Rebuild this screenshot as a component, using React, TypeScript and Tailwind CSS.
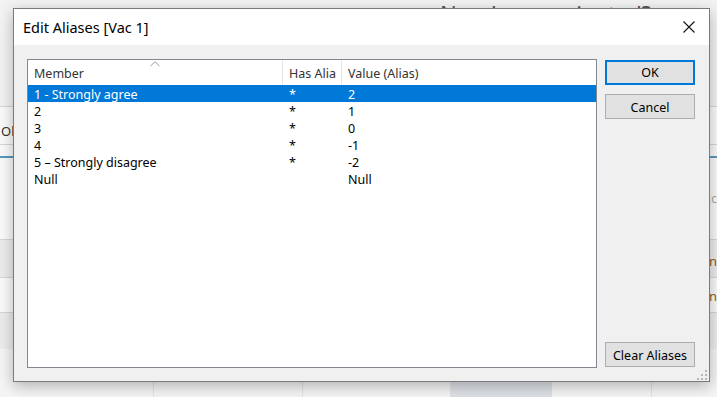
import React from "react";

const rows = [
  { m: "1 - Strongly agree", h: "*", v: "2", sel: true },
  { m: "2", h: "*", v: "1" },
  { m: "3", h: "*", v: "0" },
  { m: "4", h: "*", v: "-1" },
  { m: "5 – Strongly disagree", h: "*", v: "-2" },
  { m: "Null", h: "", v: "Null" },
];

export default function App() {
  return (
    <div className="relative w-[717px] h-[397px] overflow-hidden bg-[#f7f7f7] font-['Noto_Sans',sans-serif]">
      {/* background page */}
      <div className="flex flex-col h-full">
        <div className="h-[107px] shrink-0 bg-[#f3f3f3] pl-[440px] pt-[2px] text-[22px] leading-none text-[#555] border-b border-[#d6d6d6] whitespace-nowrap">
          Number vaccinated?
        </div>
        <div className="h-[38px] shrink-0 flex items-center pl-[1px] pt-[12px] text-[13px] text-[#333] border-b border-[#d6d6d6] bg-[#fafafa]">
          Ol
        </div>
        <div className="h-[11px] shrink-0 bg-[#fafafa]" />
        <div className="h-[2px] shrink-0 bg-[#5a96c0]" />
        <div className="h-[81px] shrink-0 flex items-center justify-end text-[12px] text-[#b3a88c] bg-[#fafafa]">
          l.c
        </div>
        <div className="h-[38px] shrink-0 flex items-center justify-end pt-[6px] text-[13px] text-[#8a5a2a] border-t border-[#d6d6d6] bg-[#ececec]">
          n
        </div>
        <div className="h-[35px] shrink-0 flex items-center justify-end pt-[4px] text-[13px] text-[#8a5a2a] border-t border-[#d6d6d6] bg-[#fafafa]">
          n
        </div>
        <div className="h-[37px] shrink-0 border-t border-[#d6d6d6] bg-[#ececec]" />
        <div className="flex-1 flex bg-[#f5f5f5]">
          <div className="w-[154px] border-r border-[#e2e2e2]" />
          <div className="w-[149px] border-r border-[#e2e2e2]" />
          <div className="w-[148px] border-r border-[#e2e2e2]" />
          <div className="w-[101px] border-r border-[#e2e2e2] bg-[#dde1e6]" />
          <div className="w-[100px] border-r border-[#e2e2e2]" />
        </div>
      </div>

      {/* dialog */}
      <div className="absolute left-[13px] top-[8px] w-[697px] h-[374px] flex flex-col border border-[#7a7a7a] bg-[#f0f0f0] shadow-[0_4px_14px_rgba(0,0,0,0.28)]">
        <div className="h-[36px] shrink-0 bg-white flex items-center justify-between pl-[9px] pr-[14px]">
          <span className="text-[14.5px] text-black leading-none">Edit Aliases [Vac 1]</span>
          <svg width="12" height="12" viewBox="0 0 12 12" className="block">
            <path d="M0.5 0.5 L11.5 11.5 M11.5 0.5 L0.5 11.5" stroke="#111" strokeWidth="1.1" fill="none" />
          </svg>
        </div>
        <div className="flex-1 flex gap-[8px] pt-[14px] pb-[13px] pl-[13px] pr-[14px]">
          {/* list */}
          <div className="w-[570px] flex flex-col border border-[#828790] bg-white text-[12.5px] leading-none text-black">
            <div className="h-[25px] shrink-0 flex text-[#333]">
              <div className="relative w-[255px] flex items-center pl-[6px] pt-[4px] border-r border-[#e5e5e5]">
                Member
                <svg width="10" height="6" viewBox="0 0 10 6" className="absolute left-[122px] top-[1px]">
                  <path d="M0.5 5 L5 0.8 L9.5 5" stroke="#9a9a9a" strokeWidth="1" fill="none" />
                </svg>
              </div>
              <div className="w-[59px] flex items-center pl-[6px] pt-[4px] border-r border-[#e5e5e5] overflow-hidden whitespace-nowrap">
                Has Alia
              </div>
              <div className="flex-1 flex items-center pl-[6px] pt-[4px]">Value (Alias)</div>
            </div>
            {rows.map((r, i) => (
              <div
                key={i}
                className={
                  r.sel
                    ? "h-[17px] shrink-0 flex items-center pt-[3px] bg-[#0078d7] text-white"
                    : "h-[17px] shrink-0 flex items-center pt-[3px]"
                }
              >
                <div className="w-[255px] pl-[6px] whitespace-nowrap">{r.m}</div>
                <div className="w-[59px] pl-[6px]">{r.h}</div>
                <div className="flex-1 pl-[6px]">{r.v}</div>
              </div>
            ))}
          </div>
          {/* buttons */}
          <div className="w-[90px] flex flex-col pt-[1px] pb-[1px] text-[12.5px] text-black">
            <button className="h-[25px] pt-[2px] bg-[#e1e1e1] border-2 border-[#0078d7] flex items-center justify-center leading-none">
              OK
            </button>
            <button className="h-[25px] pt-[3px] mt-[9px] bg-[#e1e1e1] border border-[#adadad] flex items-center justify-center leading-none">
              Cancel
            </button>
            <div className="flex-1" />
            <button className="h-[25px] pt-[3px] bg-[#e1e1e1] border border-[#adadad] flex items-center justify-center leading-none">
              Clear Aliases
            </button>
          </div>
        </div>
        <svg width="10" height="10" viewBox="0 0 10 10" className="absolute right-[2px] bottom-[1px]">
          <rect x="8" y="0" width="2" height="2" fill="#b5b5b5" />
          <rect x="4" y="4" width="2" height="2" fill="#b5b5b5" />
          <rect x="8" y="4" width="2" height="2" fill="#b5b5b5" />
          <rect x="0" y="8" width="2" height="2" fill="#b5b5b5" />
          <rect x="4" y="8" width="2" height="2" fill="#b5b5b5" />
          <rect x="8" y="8" width="2" height="2" fill="#b5b5b5" />
        </svg>
      </div>
    </div>
  );
}
